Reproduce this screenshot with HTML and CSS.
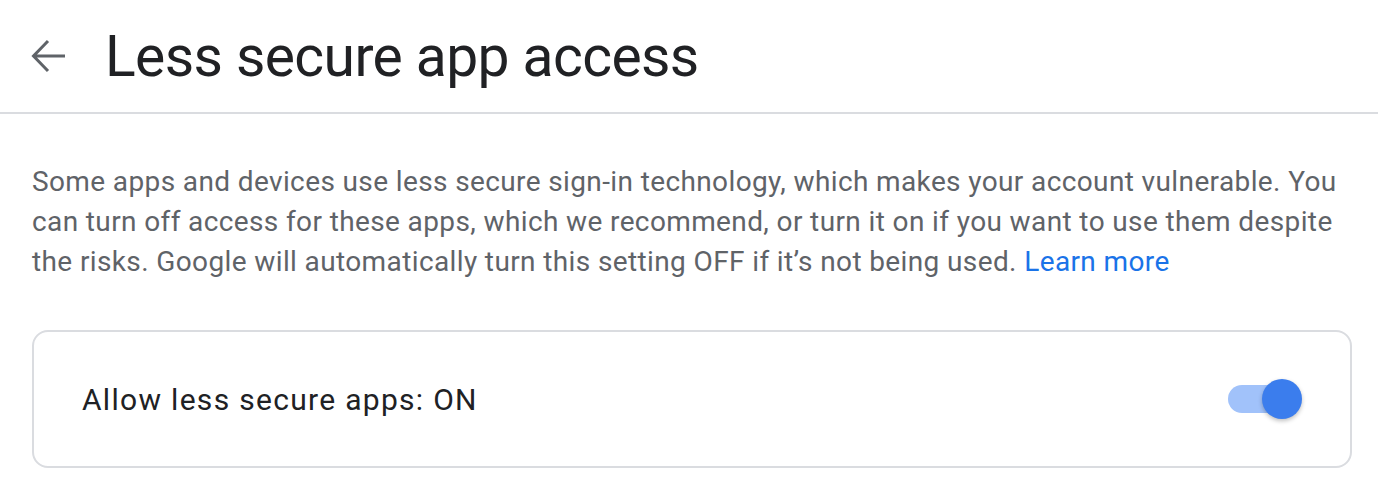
FILE: index.html
```html
<!DOCTYPE html>
<html lang="en">

<head>
    <meta charset="UTF-8">
    <meta name="viewport" content="width=device-width, initial-scale=1.0">
    <title>Less secure app access</title>
    <link rel="stylesheet" href="styles.css">
</head>

<body>

    <header class="top">
        <a class="back" href="#" aria-label="Back">
            <svg width="40" height="40" viewBox="0 0 40 40">
                <path d="M36 20H5M19 5L4.5 20 19 35" fill="none" stroke="#5f6368" stroke-width="3" />
            </svg>
        </a>
        <h1>Less secure app access</h1>
    </header>

    <main class="page">
        <p class="intro">
            Some apps and devices use less secure sign-in technology, which makes your account vulnerable. You<br>
            can turn off access for these apps, which we recommend, or turn it on if you want to use them despite<br>
            the risks. Google will automatically turn this setting OFF if it’s not being used. <a href="#">Learn more</a>
        </p>

        <section class="card">
            <span class="label">Allow less secure apps: ON</span>
            <div class="switch">
                <span class="track"></span>
                <span class="thumb"></span>
            </div>
        </section>
    </main>

</body>

</html>
```

FILE: styles.css
```css
body { margin: 0; font-family: Roboto, "Liberation Sans", sans-serif; background: #fff; }

.top { display: flex; align-items: center; height: 112px; padding-left: 29px; border-bottom: 2px solid #dadce0; }
.top .back { display: flex; width: 40px; height: 40px; margin-right: 36px; }
.top h1 { margin: 0; font-size: 57px; font-weight: 400; color: #202124; letter-spacing: -0.6px; }

.page { padding: 48px 26px 0 32px; }
.intro { margin: 0 0 48px; font-size: 28px; line-height: 40px; color: #5f6368; letter-spacing: 0.38px; white-space: nowrap; }
.intro a { color: #1a73e8; text-decoration: none; }

.card { display: flex; align-items: center; justify-content: space-between; height: 134px; padding: 0 48px; border: 2px solid #dadce0; border-radius: 16px; }
.card .label { font-size: 30px; color: #202124; letter-spacing: 1.3px; }

.switch { position: relative; width: 74px; height: 40px; }
.switch .track { position: absolute; left: 0; top: 6px; width: 68px; height: 28px; border-radius: 14px; background: #a1c2fa; }
.switch .thumb { position: absolute; right: 0; top: 0; width: 40px; height: 40px; border-radius: 50%; background: #3b7ded; box-shadow: 0 2px 4px rgba(0, 0, 0, 0.25); }
```
